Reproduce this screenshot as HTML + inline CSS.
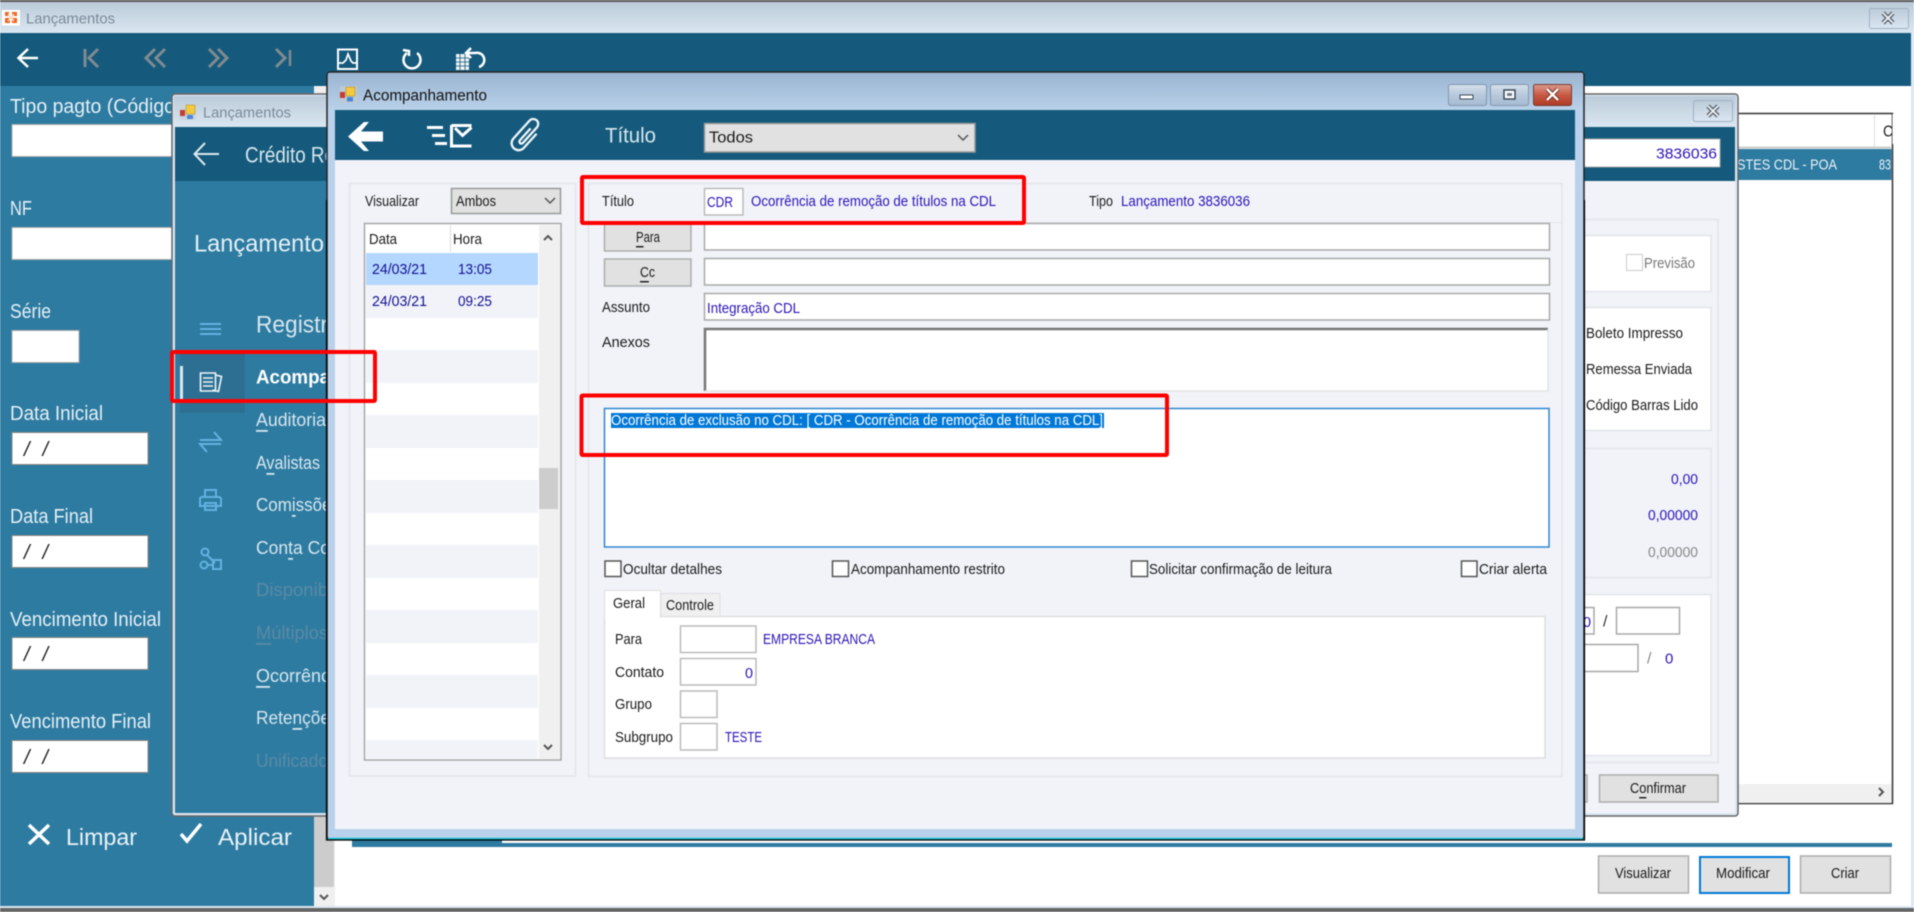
<!DOCTYPE html>
<html lang="pt"><head><meta charset="utf-8"><title>Lançamentos</title>
<style>
html,body{margin:0;padding:0;width:1914px;height:912px;overflow:hidden;background:#fff}
svg{display:block;filter:blur(.4px)}
text{font-family:"Liberation Sans",Arial,sans-serif;dominant-baseline:central;font-size:14.5px;fill:#1a1a1a;transform:translateY(1px)}
.b{fill:#2a14b8}.w{fill:#fff}.lb{fill:#e4f0f6;font-size:20px}.m{fill:#d6e6ee;font-size:18px}.d{fill:#5a8aa6;font-size:18px}
.in{fill:#fff;stroke:#a9a9a9;stroke-width:1.5}.bx{fill:none;stroke:#e2e4e9;stroke-width:1.5}.btn{fill:#e1e1e1;stroke:#adadad;stroke-width:1.5}
.ck{fill:#fff;stroke:#555;stroke-width:1.5}
.red{fill:none;stroke:#f00;stroke-width:4}
.g{fill:none;stroke:#7f8b90;stroke-width:3}.wi{fill:none;stroke:#fff;stroke-width:2.5}.ic{fill:none;stroke:#62b2e2;stroke-width:2}
.u{text-decoration:underline}
.sl{font-size:20px;fill:#222;font-style:italic}
</style></head><body>
<svg xmlns="http://www.w3.org/2000/svg" width="1914" height="912" viewBox="0 0 1914 912">
<defs>
<linearGradient id="t1" x1="0" y1="0" x2="0" y2="1"><stop offset="0" stop-color="#bccbd9"/><stop offset="1" stop-color="#dbe7f2"/></linearGradient>
<linearGradient id="t3" x1="0" y1="0" x2="0" y2="1"><stop offset="0" stop-color="#9bb5d2"/><stop offset="1" stop-color="#b9d1e9"/></linearGradient>
<linearGradient id="bt" x1="0" y1="0" x2="0" y2="1"><stop offset="0" stop-color="#d5e0ec"/><stop offset=".5" stop-color="#b8c9dc"/><stop offset="1" stop-color="#a5bad2"/></linearGradient>
<linearGradient id="rd" x1="0" y1="0" x2="0" y2="1"><stop offset="0" stop-color="#dc9a8c"/><stop offset=".5" stop-color="#c85a45"/><stop offset="1" stop-color="#b03a22"/></linearGradient>
</defs>

<!-- MAIN WINDOW -->
<rect width="1914" height="912" fill="#dbe7f2"/>
<rect width="1914" height="2" fill="#555"/>
<rect y="2" width="1914" height="31" fill="url(#t1)"/>
<rect x="2" y="10" width="18" height="15.500" fill="#fff"/>
<path d="M5 12h4v4H5zM12 12h5v4h-5zM5 18h5v5H5zM12 18h5v5h-5z" fill="#f0641e"/>
<path d="M8 14l6 7M14 14l-6 7" stroke="#fbd9c4" stroke-width="1.500"/>
<text x="26" y="18" textLength="89" lengthAdjust="spacingAndGlyphs" style="font-size:15px;fill:#7b8a99">Lançamentos</text>
<rect y="33" width="1911" height="53" fill="#155a7c"/>
<path class="wi" d="M38 58H19M28 49l-9.500 9 9.500 9"/>
<path class="g" d="M85 49v18M98 49l-9 9 9 9M155 49l-9 9 9 9M165 49l-9 9 9 9M209 49l9 9-9 9M218 49l9 9-9 9M276 49l9 9-9 9"/>
<path d="M290 50v16" stroke="#7f8b90" stroke-width="2.500" fill="none"/>
<rect x="338" y="49.500" width="19" height="19.500" fill="none" stroke="#fff" stroke-width="2"/>
<path d="M339 63h4l3-3 2-6 3 7 2 2h4" fill="none" stroke="#fff" stroke-width="1.700"/>
<path d="M407 53a8.500 8.500 0 1 0 10 0M403 50l6 1 0 5" class="wi"/>
<path d="M456 54h13v16h-13z" fill="#eef2f4"/>
<path d="M456 58h13M456 62h13M456 66h13M460 54v16M465 54v16" stroke="#155a7c" stroke-width=".8"/>
<path class="wi" d="M466 53h9a7 7 0 0 1 4 14M471 48l-5 5 5 5"/>
<!-- sidebar -->
<rect y="86" width="314" height="822" fill="#2e7ba1"/>
<rect x="314" y="86" width="21" height="822" fill="#f0f0f0"/>
<rect x="314" y="100" width="20" height="787" fill="#ccc"/>
<path d="M320 895l4 4 4-4" fill="none" stroke="#555" stroke-width="2"/>
<rect x="335" y="86" width="1576" height="822" fill="#fff"/>
<rect y="908" width="1914" height="4" fill="#666"/>
<rect y="906" width="1911" height="2" fill="#dbe7f2"/>
<text class="lb" x="10" y="106" textLength="165" lengthAdjust="spacingAndGlyphs">Tipo pagto (Código</text>
<rect x="12" y="124.500" width="160" height="32" fill="#fff" stroke="#aaa"/>
<text class="lb" x="10" y="208" textLength="22" lengthAdjust="spacingAndGlyphs">NF</text>
<rect x="12" y="227.500" width="160" height="32" fill="#fff" stroke="#aaa"/>
<text class="lb" x="10" y="311" textLength="41" lengthAdjust="spacingAndGlyphs">Série</text>
<rect x="12" y="330.500" width="67" height="32" fill="#fff" stroke="#aaa"/>
<text class="lb" x="10" y="413" textLength="93" lengthAdjust="spacingAndGlyphs">Data Inicial</text>
<rect x="12" y="432.500" width="136" height="32" fill="#fff" stroke="#8a8580"/>
<text class="sl" x="24" y="449" textLength="24" lengthAdjust="spacing">/ /</text>
<text class="lb" x="10" y="516" textLength="83" lengthAdjust="spacingAndGlyphs">Data Final</text>
<rect x="12" y="535.500" width="136" height="32" fill="#fff" stroke="#8a8580"/>
<text class="sl" x="24" y="552" textLength="24" lengthAdjust="spacing">/ /</text>
<text class="lb" x="10" y="619" textLength="151" lengthAdjust="spacingAndGlyphs">Vencimento Inicial</text>
<rect x="12" y="637.500" width="136" height="32" fill="#fff" stroke="#8a8580"/>
<text class="sl" x="24" y="654" textLength="24" lengthAdjust="spacing">/ /</text>
<text class="lb" x="10" y="721" textLength="141" lengthAdjust="spacingAndGlyphs">Vencimento Final</text>
<rect x="12" y="740.500" width="136" height="32" fill="#fff" stroke="#8a8580"/>
<text class="sl" x="24" y="757" textLength="24" lengthAdjust="spacing">/ /</text>
<path d="M29 825l20 19M49 825l-20 19" fill="none" stroke="#fff" stroke-width="3.500"/>
<text x="66" y="836" textLength="71" lengthAdjust="spacingAndGlyphs" style="font-size:23px;fill:#eaf3f8">Limpar</text>
<path d="M181 834l6 7 14-17" fill="none" stroke="#fff" stroke-width="3.500"/>
<text x="218" y="836" textLength="74" lengthAdjust="spacingAndGlyphs" style="font-size:23px;fill:#eaf3f8">Aplicar</text>
<!-- main right table -->
<path d="M1738 113.500H1892.500V803.500H1738" fill="none" stroke="#333" stroke-width="1.500"/>
<path d="M1738 147.500H1891" stroke="#ccc" stroke-width="2"/>
<path d="M1874.500 114V147" stroke="#ddd"/>
<text x="1883" y="131" textLength="10" lengthAdjust="spacingAndGlyphs" style="font-size:16px">C</text>
<rect x="1892.500" y="114" width="6" height="30" fill="#fff"/>
<rect x="1738" y="149" width="153.500" height="31" fill="#2e7ba1"/>
<text x="1737" y="164" textLength="100" lengthAdjust="spacingAndGlyphs" style="font-size:15px;fill:#eaf3f8">STES CDL - POA</text>
<text x="1879" y="164" style="font-size:15px;fill:#eaf3f8" textLength="12" lengthAdjust="spacingAndGlyphs">83</text>
<rect x="1738" y="784" width="153.500" height="19" fill="#f0f0f0"/>
<path d="M1879 788l4 4-4 4" fill="none" stroke="#555" stroke-width="2"/>
<rect x="352" y="840" width="150" height="7" fill="#2e7ba1"/>
<rect x="352" y="843" width="1540" height="4" fill="#2e7ba1"/>
<rect x="1598.500" y="856" width="90" height="37" class="btn"/>
<text x="1615" y="873" textLength="56" lengthAdjust="spacingAndGlyphs">Visualizar</text>
<rect x="1700" y="857" width="89" height="36" fill="#e1e1e1" stroke="#0078d7" stroke-width="2"/>
<text x="1716" y="873" textLength="54" lengthAdjust="spacingAndGlyphs">Modificar</text>
<rect x="1800.500" y="856" width="90" height="37" class="btn"/>
<text x="1831" y="873" textLength="28" lengthAdjust="spacingAndGlyphs">Criar</text>
<rect x="1869.500" y="8.500" width="39" height="20" rx="2" fill="url(#t1)" stroke="#9fb0c2"/>
<path d="M1883 13l10 10M1893 13l-10 10" stroke="#5a6570" stroke-width="4.500" fill="none"/>
<path d="M1883 13l10 10M1893 13l-10 10" stroke="#eef1f4" stroke-width="1.800" fill="none"/>

<!-- DIALOG 2 -->
<rect x="172" y="94" width="1566" height="722" rx="3" fill="#dbe7f2" stroke="#666" stroke-width="1.500"/>
<rect x="174" y="96" width="1562" height="31" fill="url(#t1)"/>
<rect x="180" y="104" width="16" height="16" fill="#c9d4df"/>
<rect x="180" y="110" width="5" height="6" fill="#c83b30"/><rect x="186" y="105" width="9" height="9" fill="#f4c93c" stroke="#a58a20" stroke-width=".5"/><rect x="187" y="115" width="6" height="4" fill="#4a86d8"/>
<text x="203" y="112" textLength="88" lengthAdjust="spacingAndGlyphs" style="font-size:15px;fill:#7b8a99">Lançamentos</text>
<rect x="175" y="127" width="1560" height="54" fill="#155a7c"/>
<path d="M219 154H195M205 143l-10.500 11 10.500 11" fill="none" stroke="#dbe8ef" stroke-width="2"/>
<text x="245" y="154" textLength="90" lengthAdjust="spacingAndGlyphs" style="font-size:22px;fill:#d6e6ee">Crédito Re</text>
<rect x="175" y="181" width="1560" height="632" fill="#f1f3f9"/>
<rect x="175" y="181" width="170" height="632" fill="#2e7ba1"/>
<text x="194" y="243" textLength="130" lengthAdjust="spacingAndGlyphs" style="font-size:24px;fill:#e4f0f6">Lançamento</text>
<path class="ic" d="M200 324h21M200 329h21M200 334h21"/>
<text x="256" y="324" textLength="72" lengthAdjust="spacingAndGlyphs" style="font-size:24px;fill:#d6e6ee">Registr</text>
<rect x="180" y="353" width="65" height="60" fill="#2c6f92"/>
<rect x="180" y="366" width="3" height="33" fill="#dbe8ef"/>
<path d="M200.500 373h15v18h-15zM215.500 375l6 1.500-3 15-6-1.500M203 378h10M203 382h10M203 386h10" fill="none" stroke="#eef5f9" stroke-width="1.600"/>
<text x="256" y="377" textLength="74" lengthAdjust="spacingAndGlyphs" style="font-size:19px;font-weight:bold;fill:#fff">Acompa</text>
<text class="m" x="256" y="419" textLength="70" lengthAdjust="spacingAndGlyphs"><tspan class="u">A</tspan>uditoria</text>
<path class="ic" d="M200 440h21l-7-8M221 444h-21l7 8"/>
<text class="m" x="256" y="462" textLength="64" lengthAdjust="spacingAndGlyphs">A<tspan class="u">v</tspan>alistas</text>
<path class="ic" d="M205 498v-8h11v8M200 506v-7a2 2 0 0 1 2-2h17a2 2 0 0 1 2 2v7zM205 503h11v7h-11z"/>
<text class="m" x="256" y="504" textLength="84" lengthAdjust="spacingAndGlyphs">Com<tspan class="u">i</tspan>ssões</text>
<circle class="ic" cx="205" cy="552" r="3.500"/><circle class="ic" cx="204" cy="565" r="3.500"/>
<path class="ic" d="M207 555l8 8M208 565h5M213 560h8v9h-8z"/>
<text class="m" x="256" y="547" textLength="74" lengthAdjust="spacingAndGlyphs">Con<tspan class="u">t</tspan>a Co</text>
<text class="d" x="256" y="589" textLength="72" lengthAdjust="spacingAndGlyphs">Disponib</text>
<text class="d" x="256" y="632" textLength="72" lengthAdjust="spacingAndGlyphs"><tspan class="u">M</tspan>últiplos</text>
<text class="m" x="256" y="675" textLength="74" lengthAdjust="spacingAndGlyphs"><tspan class="u">O</tspan>corrênc</text>
<text class="m" x="256" y="717" textLength="74" lengthAdjust="spacingAndGlyphs">Rete<tspan class="u">n</tspan>çõe</text>
<text class="d" x="256" y="760" textLength="72" lengthAdjust="spacingAndGlyphs">Unificado</text>
<!-- dialog 2 right portion -->
<rect x="1693.500" y="100.500" width="39" height="21" rx="2" fill="url(#t1)" stroke="#9fb0c2"/>
<path d="M1708 106l10 10M1718 106l-10 10" stroke="#5a6570" stroke-width="4.500" fill="none"/>
<path d="M1708 106l10 10M1718 106l-10 10" stroke="#eef1f4" stroke-width="1.800" fill="none"/>
<rect x="1560" y="139" width="160" height="28" fill="#fff" stroke="#aaa"/>
<text class="b" x="1656" y="153" textLength="61" lengthAdjust="spacingAndGlyphs" style="font-size:15px">3836036</text>
<rect x="1500" y="219.500" width="218" height="543" class="bx"/>
<rect x="1500" y="235.500" width="211" height="56" fill="#fff" stroke="#e2e4e9" stroke-width="1.500"/>
<rect x="1626.500" y="254.500" width="16" height="16" fill="#fff" stroke="#ccc"/>
<text x="1644" y="263" textLength="51" lengthAdjust="spacingAndGlyphs" style="fill:#777">Previsão</text>
<rect x="1500" y="307.500" width="211" height="123" fill="#fff" stroke="#e2e4e9" stroke-width="1.500"/>
<text x="1586" y="333" textLength="97" lengthAdjust="spacingAndGlyphs">Boleto Impresso</text>
<text x="1586" y="369" textLength="106" lengthAdjust="spacingAndGlyphs">Remessa Enviada</text>
<text x="1586" y="405" textLength="112" lengthAdjust="spacingAndGlyphs">Código Barras Lido</text>
<rect x="1500" y="448.500" width="211" height="129" fill="#f1f3f9" stroke="#e2e4e9" stroke-width="1.500"/>
<text class="b" x="1671" y="479" textLength="27" lengthAdjust="spacingAndGlyphs">0,00</text>
<text class="b" x="1648" y="515" textLength="50" lengthAdjust="spacingAndGlyphs">0,00000</text>
<text x="1648" y="552" textLength="50" lengthAdjust="spacingAndGlyphs" style="fill:#888">0,00000</text>
<rect x="1500" y="594.500" width="211" height="161" fill="#fff" stroke="#e2e4e9" stroke-width="1.500"/>
<rect x="1560" y="607.500" width="34" height="26.500" class="in"/>
<text class="b" x="1583" y="622">0</text>
<text x="1603" y="621" style="font-size:16px;fill:#333">/</text>
<rect x="1616.500" y="607.500" width="63" height="26.500" class="in"/>
<rect x="1560" y="644.500" width="78" height="27" class="in"/>
<text x="1647" y="658" style="font-size:16px;fill:#888">/</text>
<text class="b" x="1665" y="658" style="font-size:15px">0</text>
<rect x="1500" y="775" width="87" height="27" class="btn"/>
<rect x="1599.500" y="775" width="118.500" height="27" class="btn"/>
<text x="1630" y="788" textLength="56" lengthAdjust="spacingAndGlyphs">C<tspan class="u">o</tspan>nfirmar</text>

<!-- DIALOG 3 -->
<rect x="327" y="72" width="1257" height="767.500" rx="3" fill="#b9d1ea" stroke="#222" stroke-width="1.500"/>
<path d="M326.500 200V840H1584.500V200" fill="none" stroke="#000" stroke-width="1.200"/>
<rect x="328" y="73" width="1255" height="37" fill="url(#t3)"/>
<rect x="328" y="110" width="7" height="728" fill="#b9d1ea"/>
<rect x="1575" y="110" width="8" height="728" fill="#b9d1ea"/>
<path d="M328 838.500H1583" stroke="#1dc6d8" stroke-width="1.500"/>
<rect x="340" y="86" width="17" height="17" fill="#bdc9d6"/>
<rect x="340" y="92" width="5" height="6" fill="#c83b30"/><rect x="346" y="87" width="9" height="9" fill="#f4c93c" stroke="#a58a20" stroke-width=".5"/><rect x="347" y="97" width="6" height="4.500" fill="#4a86d8"/>
<text x="363" y="95" textLength="124" lengthAdjust="spacingAndGlyphs" style="font-size:15.500px;fill:#111">Acompanhamento</text>
<rect x="1448.500" y="84.500" width="38" height="21" rx="2" fill="url(#bt)" stroke="#8296ad"/>
<rect x="1460" y="95" width="13" height="4" fill="#fff" stroke="#3a4a5a"/>
<rect x="1490.500" y="84.500" width="38" height="21" rx="2" fill="url(#bt)" stroke="#8296ad"/>
<rect x="1504" y="90" width="11" height="9" fill="#fff" stroke="#3a4a5a" stroke-width="1.500"/><rect x="1507" y="93" width="5" height="3" fill="#6d7f92"/>
<rect x="1533.500" y="84.500" width="38" height="21" rx="2" fill="url(#rd)" stroke="#7a3a30"/>
<path d="M1547 89l11 11M1558 89l-11 11" stroke="#6a2a20" stroke-width="4.200" fill="none"/>
<path d="M1547 89l11 11M1558 89l-11 11" stroke="#fff" stroke-width="2.400" fill="none"/>
<rect x="335" y="110" width="1240" height="50" fill="#155a7c"/>
<path d="M348 136.500L364 122h5l-8 9.500h22v10h-22l8 9.500h-5z" fill="#fff"/>
<path d="M427 127.500h16M432 135.500h13M435 143.500h12" stroke="#fff" stroke-width="3" fill="none"/>
<path d="M451.500 125.500h20M451.500 125v21h20M455 128l7.500 7.500 9-8" stroke="#fff" stroke-width="3" fill="none"/>
<g transform="rotate(42 526 135)"><path d="M533 127V146a7 7 0 0 1-14 0V122a5 5 0 0 1 10 0V143a2 2 0 0 1-4 0V127" fill="none" stroke="#eef5f9" stroke-width="2.300"/></g>
<text x="605" y="135" textLength="51" lengthAdjust="spacingAndGlyphs" style="font-size:21px;fill:#d6e6ee">Título</text>
<rect x="704.500" y="123.500" width="270.500" height="28.500" fill="#e1e1e1" stroke="#999" stroke-width="1.500"/>
<text x="709" y="137" textLength="44" lengthAdjust="spacingAndGlyphs" style="font-size:16px">Todos</text>
<path d="M958 135l5 5 5-5" fill="none" stroke="#555" stroke-width="1.500"/>
<rect x="335" y="160" width="1240" height="669" fill="#f1f3f9"/>
<!-- left panel -->
<rect x="349.500" y="183.500" width="226" height="592.500" class="bx"/>
<text x="365" y="201" textLength="54" lengthAdjust="spacingAndGlyphs">Visualizar</text>
<rect x="451.500" y="188.500" width="109" height="25" fill="#e1e1e1" stroke="#999" stroke-width="1.500"/>
<text x="456" y="201" textLength="40" lengthAdjust="spacingAndGlyphs">Ambos</text>
<path d="M545 198l5 5 5-5" fill="none" stroke="#555" stroke-width="1.500"/>
<rect x="364.500" y="223.500" width="196.500" height="536.500" fill="#fff" stroke="#a6a6a6" stroke-width="1.500"/>
<path d="M450.500 225V252" stroke="#ddd"/>
<text x="369" y="239" textLength="28" lengthAdjust="spacingAndGlyphs">Data</text>
<text x="453" y="239" textLength="29" lengthAdjust="spacingAndGlyphs">Hora</text>
<rect x="366" y="253" width="172" height="32" fill="#b3d7ff"/>
<text class="b" x="372" y="269" textLength="55" lengthAdjust="spacingAndGlyphs" style="fill:#151090">24/03/21</text>
<text class="b" x="458" y="269" textLength="34" lengthAdjust="spacingAndGlyphs" style="fill:#151090">13:05</text>
<rect x="366" y="285" width="172" height="33" fill="#f1f3f9"/>
<text class="b" x="372" y="301" textLength="55" lengthAdjust="spacingAndGlyphs" style="fill:#151090">24/03/21</text>
<text class="b" x="458" y="301" textLength="34" lengthAdjust="spacingAndGlyphs" style="fill:#151090">09:25</text>
<path d="M366 366.500h172M366 431.500h172M366 496.500h172M366 561.500h172M366 626.500h172M366 691.500h172" stroke="#f1f3f9" stroke-width="33" fill="none"/>
<rect x="366" y="740" width="172" height="18.500" fill="#f1f3f9"/>
<rect x="539" y="225" width="21" height="533.500" fill="#f0f0f0"/>
<rect x="539" y="468" width="19" height="41" fill="#cdcdcd"/>
<path d="M544 240l4-4 4 4M544 745l4 4 4-4" fill="none" stroke="#555" stroke-width="2"/>
<!-- right panel -->
<rect x="588.500" y="183.500" width="973.500" height="593" class="bx"/>
<text x="602" y="201" textLength="32" lengthAdjust="spacingAndGlyphs">Título</text>
<rect x="704.500" y="188.500" width="38.500" height="26.500" class="in" style="stroke:#bbb"/>
<text class="b" x="707" y="202" textLength="26" lengthAdjust="spacingAndGlyphs">CDR</text>
<text class="b" x="751" y="201" textLength="245" lengthAdjust="spacingAndGlyphs">Ocorrência de remoção de títulos na CDL</text>
<text x="1089" y="201" textLength="24" lengthAdjust="spacingAndGlyphs">Tipo</text>
<text class="b" x="1121" y="201" textLength="129" lengthAdjust="spacingAndGlyphs">Lançamento 3836036</text>
<path d="M588.500 222.500H1562" stroke="#e2e4e9"/>
<rect x="604.500" y="224" width="86.500" height="27" class="btn"/>
<text x="636" y="237" textLength="24" lengthAdjust="spacingAndGlyphs"><tspan class="u">P</tspan>ara</text>
<rect x="604.500" y="259" width="86.500" height="27" class="btn"/>
<text x="640" y="272" textLength="15" lengthAdjust="spacingAndGlyphs"><tspan class="u">C</tspan>c</text>
<rect x="704.500" y="223.500" width="845" height="26.500" class="in"/>
<rect x="704.500" y="258.500" width="845" height="26.500" class="in"/>
<text x="602" y="307" textLength="48" lengthAdjust="spacingAndGlyphs">Assunto</text>
<rect x="704.500" y="293.500" width="845" height="26.500" class="in"/>
<text class="b" x="707" y="308" textLength="93" lengthAdjust="spacingAndGlyphs">Integração CDL</text>
<text x="602" y="342" textLength="48" lengthAdjust="spacingAndGlyphs">Anexos</text>
<rect x="704" y="328" width="844" height="63" fill="#fff"/>
<path d="M705 391V329H1548" fill="none" stroke="#777" stroke-width="2.500"/>
<path d="M1548 329V391H705" fill="none" stroke="#e4e4e4" stroke-width="1.500"/>
<rect x="604.500" y="408.500" width="944.500" height="138.500" fill="#fff" stroke="#2e86d0" stroke-width="1.500"/>
<rect x="611" y="413" width="493" height="15" fill="#0078d7"/>
<text class="w" x="611" y="420" textLength="492" lengthAdjust="spacingAndGlyphs">Ocorrência de exclusão no CDL: [ CDR - Ocorrência de remoção de títulos na CDL]</text>
<rect x="605" y="561" width="16" height="15.500" class="ck"/>
<text x="623" y="569" textLength="99" lengthAdjust="spacingAndGlyphs">Ocultar detalhes</text>
<rect x="832.500" y="561" width="16" height="15.500" class="ck"/>
<text x="851" y="569" textLength="154" lengthAdjust="spacingAndGlyphs">Acompanhamento restrito</text>
<rect x="1131.500" y="561" width="16" height="15.500" class="ck"/>
<text x="1149" y="569" textLength="183" lengthAdjust="spacingAndGlyphs">Solicitar confirmação de leitura</text>
<rect x="1461.500" y="561" width="15.500" height="15.500" class="ck"/>
<text x="1479" y="569" textLength="68" lengthAdjust="spacingAndGlyphs">Criar alerta</text>
<!-- tabs -->
<rect x="604.500" y="616.500" width="940.500" height="141.500" fill="#fff" stroke="#dfdfdf" stroke-width="1.500"/>
<rect x="661" y="593.500" width="59" height="23" fill="#f0f0f0" stroke="#dfdfdf"/>
<text x="666" y="605" textLength="48" lengthAdjust="spacingAndGlyphs">Controle</text>
<path d="M604.500 618V590.500H660.500V618" fill="#fff" stroke="#dfdfdf"/>
<rect x="605.500" y="612" width="54.500" height="7" fill="#fff"/>
<text x="613" y="603" textLength="32" lengthAdjust="spacingAndGlyphs">Geral</text>
<text x="615" y="639" textLength="27" lengthAdjust="spacingAndGlyphs">Para</text>
<rect x="680.500" y="626" width="75.500" height="26.500" class="in" style="stroke:#bbb"/>
<text class="b" x="763" y="639" textLength="112" lengthAdjust="spacingAndGlyphs">EMPRESA BRANCA</text>
<text x="615" y="672" textLength="49" lengthAdjust="spacingAndGlyphs">Contato</text>
<rect x="680.500" y="658.500" width="75.500" height="26.500" class="in" style="stroke:#bbb"/>
<text class="b" x="745" y="673" textLength="8" lengthAdjust="spacingAndGlyphs">0</text>
<text x="615" y="704" textLength="37" lengthAdjust="spacingAndGlyphs">Grupo</text>
<rect x="680.500" y="691" width="36.500" height="26.500" class="in" style="stroke:#bbb"/>
<text x="615" y="737" textLength="58" lengthAdjust="spacingAndGlyphs">Subgrupo</text>
<rect x="680.500" y="723.500" width="36.500" height="26.500" class="in" style="stroke:#bbb"/>
<text class="b" x="725" y="737" textLength="37" lengthAdjust="spacingAndGlyphs">TESTE</text>

<!-- ANNOTATIONS -->
<rect x="582" y="177" width="442" height="46" class="red" rx="1"/>
<rect x="581.500" y="395.500" width="585.500" height="59.500" class="red" rx="1"/>
<rect x="172" y="352" width="203" height="49" class="red" rx="1"/>
</svg>
</body></html>
